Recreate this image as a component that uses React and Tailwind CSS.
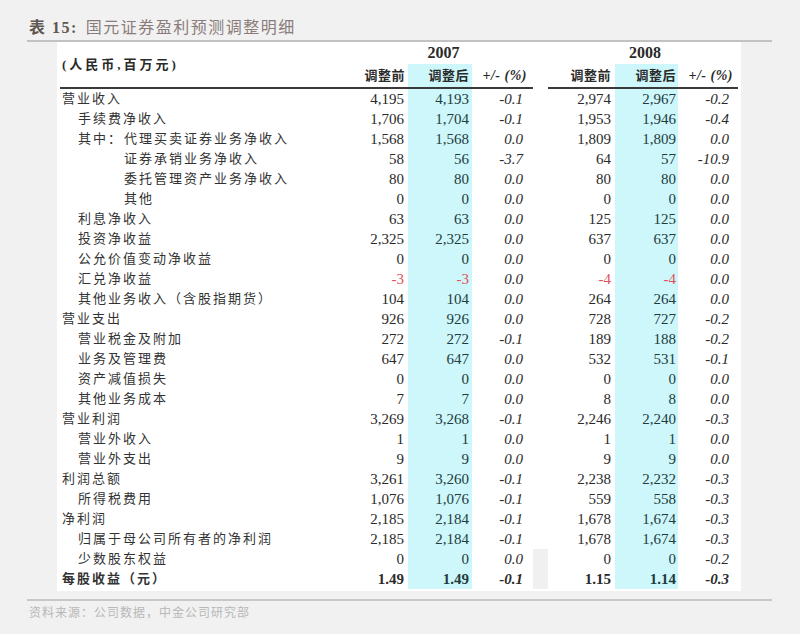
import React from "react";

const cols = "grid grid-cols-[284px_64px_64px_61px_15px_67px_63px_60px]";
const cjk = "font-['Liberation_Serif','Noto_Sans_CJK_SC',serif]";

// [indent, label, 2007 前, 2007 后, %, 2008 前, 2008 后, %]
const rows = [
    [0, "营业收入", "4,195", "4,193", "-0.1", "2,974", "2,967", "-0.2"],
    [1, "手续费净收入", "1,706", "1,704", "-0.1", "1,953", "1,946", "-0.4"],
    [3, "代理买卖证券业务净收入", "1,568", "1,568", "0.0", "1,809", "1,809", "0.0"],
    [2, "证券承销业务净收入", "58", "56", "-3.7", "64", "57", "-10.9"],
    [2, "委托管理资产业务净收入", "80", "80", "0.0", "80", "80", "0.0"],
    [2, "其他", "0", "0", "0.0", "0", "0", "0.0"],
    [1, "利息净收入", "63", "63", "0.0", "125", "125", "0.0"],
    [1, "投资净收益", "2,325", "2,325", "0.0", "637", "637", "0.0"],
    [1, "公允价值变动净收益", "0", "0", "0.0", "0", "0", "0.0"],
    [1, "汇兑净收益", "-3", "-3", "0.0", "-4", "-4", "0.0"],
    [1, "其他业务收入（含股指期货）", "104", "104", "0.0", "264", "264", "0.0"],
    [0, "营业支出", "926", "926", "0.0", "728", "727", "-0.2"],
    [1, "营业税金及附加", "272", "272", "-0.1", "189", "188", "-0.2"],
    [1, "业务及管理费", "647", "647", "0.0", "532", "531", "-0.1"],
    [1, "资产减值损失", "0", "0", "0.0", "0", "0", "0.0"],
    [1, "其他业务成本", "7", "7", "0.0", "8", "8", "0.0"],
    [0, "营业利润", "3,269", "3,268", "-0.1", "2,246", "2,240", "-0.3"],
    [1, "营业外收入", "1", "1", "0.0", "1", "1", "0.0"],
    [1, "营业外支出", "9", "9", "0.0", "9", "9", "0.0"],
    [0, "利润总额", "3,261", "3,260", "-0.1", "2,238", "2,232", "-0.3"],
    [1, "所得税费用", "1,076", "1,076", "-0.1", "559", "558", "-0.3"],
    [0, "净利润", "2,185", "2,184", "-0.1", "1,678", "1,674", "-0.3"],
    [1, "归属于母公司所有者的净利润", "2,185", "2,184", "-0.1", "1,678", "1,674", "-0.3"],
    [1, "少数股东权益", "0", "0", "0.0", "0", "0", "-0.2"],
    [0, "每股收益（元）", "1.49", "1.49", "-0.1", "1.15", "1.14", "-0.3"],
];

const Label = ({ indent, text }) => {
    if (indent === 3) {
        return (
            <div className="flex pl-[18px]">
                <span className="w-[46px]">其中：</span>
                <span>{text}</span>
            </div>
        );
    }
    const pad = indent === 0 ? "pl-[2px]" : indent === 1 ? "pl-[18px]" : "pl-[64px]";
    return <div className={pad}>{text}</div>;
};

const App = () => {
    return (
        <div className={`w-[800px] h-[634px] bg-[#f1f1f1] pt-[17px] ${cjk}`}>
            {/* Title */}
            <div className="pl-[29px] h-[21px] leading-[21px] text-[16px] tracking-[1.5px]">
                <span className="text-[#5f5752] font-bold">表 15:</span>
                <span className="text-[#8a7c7a] ml-[8px]">国元证券盈利预测调整明细</span>
            </div>
            <div className="ml-[27px] w-[745px] h-[2px] mt-[2px] bg-[#c2c2c2]" />

            {/* Table panel */}
            <div className="ml-[57px] w-[684px] bg-white pl-[3px]">
                <div className={`${cols} text-[#2a2a2a]`}>
                    {/* header row 1 */}
                    <div className="row-span-2 flex items-center pl-[2px] font-bold text-[13px] tracking-[3px] border-b-2 border-[#3a3a3a]">
                        (人民币,百万元)
                    </div>
                    <div className="col-span-3 h-[22px] leading-[22px] text-center font-bold text-[16px] pl-[10px]">2007</div>
                    <div />
                    <div className="col-span-3 h-[22px] leading-[22px] text-center font-bold text-[16px] pl-[4px]">2008</div>

                    {/* header row 2 */}
                    {["调整前", "调整后", "+/- (%)", null, "调整前", "调整后", "+/- (%)"].map((h, i) => {
                        if (h === null) return <div key={i} />;
                        const cyan = i === 1 || i === 5 ? "bg-[#cdf7fb]" : "";
                        const pr = ["pr-[3px]", "pr-[3px]", "pr-[6px]", "", "pr-[4px]", "pr-[2px]", "pr-[5px]"][i];
                        return (
                            <div
                                key={i}
                                className={`h-[25px] leading-[23px] text-right font-bold text-[13px] tracking-[0.5px] border-b-2 border-[#3a3a3a] ${cyan} ${pr}`}
                            >
                                {h === "+/- (%)" ? <span className="italic text-[14px]">+/- (%)</span> : h}
                            </div>
                        );
                    })}

                    {/* data rows */}
                    {rows.map((r, idx) => {
                        const last = idx === rows.length - 1;
                        const red = r[2].startsWith("-");
                        const bold = last ? "font-bold" : "";
                        const num = `h-[20px] leading-[20px] text-right text-[15px] font-['Liberation_Serif',serif] ${bold}`;
                        const gapBg = idx >= rows.length - 2 ? "bg-[#f0f0f0]" : "";
                        return (
                            <React.Fragment key={idx}>
                                <div className={`h-[20px] leading-[20px] text-[13px] tracking-[2px] text-[#333] ${bold}`}>
                                    <Label indent={r[0]} text={r[1]} />
                                </div>
                                <div className={`${num} pr-[4px] ${red ? "text-[#e05058]" : ""}`}>{r[2]}</div>
                                <div className={`${num} pr-[3px] bg-[#cdf7fb] ${red ? "text-[#e05058]" : "text-[#1f3b3b]"}`}>{r[3]}</div>
                                <div className={`${num} pr-[10px] italic`}>{r[4]}</div>
                                <div className={gapBg} />
                                <div className={`${num} pr-[4px] ${red ? "text-[#e05058]" : ""}`}>{r[5]}</div>
                                <div className={`${num} pr-[2px] bg-[#cdf7fb] ${red ? "text-[#e05058]" : "text-[#1f3b3b]"}`}>{r[6]}</div>
                                <div className={`${num} pr-[9px] italic`}>{r[7]}</div>
                            </React.Fragment>
                        );
                    })}
                </div>
                <div className="h-[2px]" />
            </div>

            {/* Footer */}
            <div className="ml-[27px] w-[745px] h-[2px] mt-[8px] bg-[#c8c8c8]" />
            <div className="pl-[29px] mt-[2px] h-[20px] leading-[20px] text-[12px] tracking-[1px] text-[#b8b8b8]">
                资料来源：公司数据，中金公司研究部
            </div>
        </div>
    );
};

export default App;
